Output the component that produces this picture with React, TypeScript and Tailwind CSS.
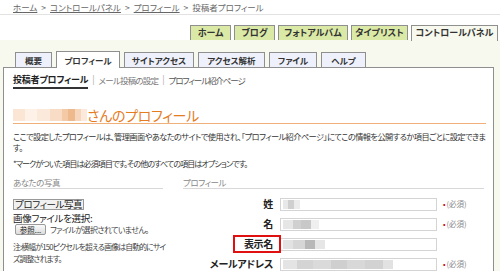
import React from "react";

const topTabs = [
  { label: "ホーム", w: "w-[41px]" },
  { label: "ブログ", w: "w-[41px]" },
  { label: "フォトアルバム", w: "w-[70px]" },
  { label: "タイプリスト", w: "w-[57px]" },
];

const subTabs = [
  { label: "概要", w: "w-[37px]", active: false },
  { label: "プロフィール", w: "w-[64px]", active: true },
  { label: "サイトアクセス", w: "w-[70px]", active: false },
  { label: "アクセス解析", w: "w-[67px]", active: false },
  { label: "ファイル", w: "w-[48px]", active: false },
  { label: "ヘルプ", w: "w-[45px]", active: false },
];

function Blur({ blocks }: { blocks: { w: number; c: string }[] }) {
  return (
    <div className="flex h-[9px]">
      {blocks.map((b, i) => (
        <div key={i} style={{ width: b.w, background: b.c }} className="h-full" />
      ))}
    </div>
  );
}

function Row({
  label,
  blocks,
  required,
  highlight,
}: {
  label: string;
  blocks: { w: number; c: string }[];
  required: boolean;
  highlight?: boolean;
}) {
  return (
    <div className="relative flex h-[20px] items-center">
      <div className="w-[90px] text-right text-[10px] font-bold leading-[12px] tracking-[-0.3px] text-[#222]">{label}</div>
      <div className="ml-[7px] flex h-[13px] w-[157px] items-center border border-[#d4d4d4] bg-white pl-[2px]">
        <Blur blocks={blocks} />
      </div>
      {required && (
        <div className="ml-[6px] flex items-center text-[7.5px] leading-[10px] text-[#888]">
          <span className="mr-[1px] text-[#cc0000]">•</span>(必須)
        </div>
      )}
      {highlight && (
        <div className="absolute left-[50px] top-[1px] h-[18px] w-[48px] border-2 border-[#e01010]" />
      )}
    </div>
  );
}

export default function App() {
  return (
    <div className="h-[271px] w-[500px] overflow-hidden bg-white font-['Noto_Sans_CJK_JP',sans-serif] text-[#333] [font-feature-settings:'palt']">
      {/* breadcrumb */}
      <div className="flex h-[15px] items-center gap-[4px] border-b border-[#e2e2e2] pl-[13px] text-[8.5px] leading-[10px] text-[#666]">
        <span className="underline">ホーム</span>
        <span>&gt;</span>
        <span className="underline">コントロールパネル</span>
        <span>&gt;</span>
        <span className="underline">プロフィール</span>
        <span>&gt;</span>
        <span>投稿者プロフィール</span>
      </div>

      {/* top tabs */}
      <div className="flex h-[25px] items-end justify-end gap-[3px] pr-[2px]">
        {topTabs.map((t) => (
          <div
            key={t.label}
            className={`${t.w} flex h-[15px] items-center justify-center border border-b-0 border-[#8f8f8f] bg-[#dbe9a6] text-[9px] font-bold leading-[12px] text-[#333]`}
          >
            {t.label}
          </div>
        ))}
        <div className="relative z-10 -mb-px flex h-[16px] w-[87px] items-center justify-center border border-b-0 border-[#8f8f8f] bg-[#f7f9ee] pb-[1px] text-[9px] font-bold leading-[12px] text-[#333]">
          コントロールパネル
        </div>
      </div>

      {/* green area */}
      <div className="h-[231px] bg-[#f7f9ee] pt-[12px]">
        <div className="flex h-[15px] items-end gap-[4px] pl-[15px]">
          {subTabs.map((t) =>
            t.active ? (
              <div
                key={t.label}
                className={`${t.w} relative z-10 -mb-px flex h-[17px] items-center justify-center border border-b-0 border-[#8f8f8f] bg-white pb-[1px] text-[8.5px] font-bold leading-[12px] text-[#333]`}
              >
                {t.label}
              </div>
            ) : (
              <div
                key={t.label}
                className={`${t.w} flex h-[15px] items-center justify-center border border-b-0 border-[#8f8f8f] bg-[#eef1fb] text-[8.5px] font-bold leading-[12px] text-[#333]`}
              >
                {t.label}
              </div>
            )
          )}
        </div>

        {/* panel */}
        <div className="ml-[3px] h-[220px] w-[491px] border border-b-0 border-[#8f8f8f] bg-white pl-[9px] pr-[7px]">
          {/* subnav */}
          <div className="flex items-start pt-[6px] text-[9px] leading-[12px]">
            <span className="border-b-2 border-[#333] pb-[1px] font-bold tracking-[-0.2px] text-[#222]">投稿者プロフィール</span>
            <span className="mx-[4px] text-[#aaa]">|</span>
            <span className="text-[8.5px] tracking-[-0.8px] text-[#777]">メール投稿の設定</span>
            <span className="mx-[4px] text-[#aaa]">|</span>
            <span className="text-[8.5px] tracking-[-1.1px] text-[#555]">プロフィール紹介ページ</span>
          </div>

          {/* title */}
          <div className="mt-[18px] flex h-[17px] items-center border-b border-[#f0b07a]">
            <div className="flex h-[12px]">
              <div className="w-[12px] bg-[#fbe6d6]" />
              <div className="w-[12px] bg-[#fdf1e8]" />
              <div className="w-[13px] bg-[#fbe9dc]" />
              <div className="w-[12px] bg-[#f8dcc6]" />
              <div className="w-[6px] bg-[#f4c9a6]" />
              <div className="w-[7px] bg-[#efb98e]" />
              <div className="w-[6px] bg-[#f6d6bd]" />
              <div className="w-[6px] bg-[#fce9dc]" />
            </div>
            <span className="text-[14px] leading-[16px] tracking-[-0.3px] text-[#e57c1f]">さんのプロフィール</span>
          </div>

          {/* paragraph */}
          <div className="mt-[7px] whitespace-nowrap text-[8.2px] leading-[11px] tracking-[-0.55px] text-[#333]">
            ここで設定したプロフィールは、管理画面やあなたのサイトで使用され、「プロフィール紹介ページ」にてこの情報を公開するか項目ごとに設定できま
            <br />
            す。
          </div>
          <div className="mt-[5px] whitespace-nowrap text-[8px] leading-[11px] tracking-[-0.9px] text-[#333]">
            *マークがついた項目は必須項目です。その他のすべての項目はオプションです。
          </div>

          {/* columns */}
          <div className="mt-[8px] flex gap-[20px]">
            <div className="w-[150px]">
              <div className="border-b border-[#d8d8d8] pb-[1px] text-[8.5px] leading-[10px] tracking-[-0.5px] text-[#888]">
                あなたの写真
              </div>
              <div className="mt-[9px] inline-flex h-[11px] items-center border border-[#999] bg-[#f1f1f1] px-[1px] text-[9.5px] leading-[10px] tracking-[-0.4px] text-[#222]">
                プロフィール写真
              </div>
              <div className="text-[9.5px] leading-[11px] tracking-[-0.3px] text-[#222]">画像ファイルを選択:</div>
              <div className="flex items-center">
                <div className="ml-[2px] flex h-[11px] w-[31px] items-center justify-center rounded-[2px] border border-[#9a9a9a] bg-gradient-to-b from-[#fafafa] to-[#dcdcdc] text-[7.5px] leading-[9px] text-[#222]">
                  参照...
                </div>
                <span className="ml-[4px] whitespace-nowrap text-[8px] leading-[10px] tracking-[-0.6px] text-[#444]">
                  ファイルが選択されていません。
                </span>
              </div>
              <div className="mt-[6px] whitespace-nowrap text-[7.8px] leading-[12px] tracking-[-0.8px] text-[#444]">
                注:横幅が150ピクセルを超える画像は自動的にサイ
                <br />
                ズ調整されます。
              </div>
            </div>

            <div className="w-[301px]">
              <div className="border-b border-[#d8d8d8] pb-[1px] text-[8.5px] leading-[10px] tracking-[-0.5px] text-[#888]">
                プロフィール
              </div>
              <div className="mt-[5px]">
                <Row
                  label="姓"
                  required
                  blocks={[
                    { w: 5, c: "#e8e8e8" },
                    { w: 6, c: "#cfcfcf" },
                    { w: 6, c: "#ececec" },
                  ]}
                />
                <Row
                  label="名"
                  required
                  blocks={[
                    { w: 10, c: "#e6e6e6" },
                    { w: 8, c: "#d0d0d0" },
                    { w: 10, c: "#c8c8c8" },
                    { w: 8, c: "#efefef" },
                  ]}
                />
                <Row
                  label="表示名"
                  required={false}
                  highlight
                  blocks={[
                    { w: 10, c: "#e2e2e2" },
                    { w: 12, c: "#d6d6d6" },
                    { w: 10, c: "#b8b8b8" },
                    { w: 10, c: "#e6e6e6" },
                  ]}
                />
                <Row
                  label="メールアドレス"
                  required
                  blocks={[
                    { w: 14, c: "#e4e4e4" },
                    { w: 16, c: "#d4d4d4" },
                    { w: 18, c: "#dadada" },
                    { w: 16, c: "#cfcfcf" },
                    { w: 18, c: "#d8d8d8" },
                    { w: 18, c: "#d2d2d2" },
                    { w: 10, c: "#e2e2e2" },
                  ]}
                />
              </div>
            </div>
          </div>
        </div>
      </div>
    </div>
  );
}
